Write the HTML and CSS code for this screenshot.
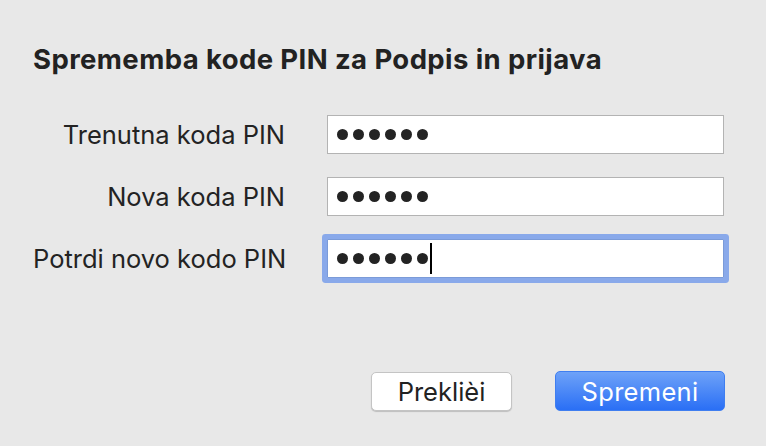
FILE: index.html
```html
<!DOCTYPE html>
<html lang="sl">
<head>
<meta charset="utf-8">
<title>Sprememba kode PIN</title>
<link rel="stylesheet" href="styles.css">
</head>
<body>
<div class="dialog">
  <h1 class="title">Sprememba kode PIN za Podpis in prijava</h1>
  <div class="form">
    <label class="label">Trenutna koda PIN</label>
    <div class="field"><span class="dot"></span><span class="dot"></span><span class="dot"></span><span class="dot"></span><span class="dot"></span><span class="dot"></span></div>
    <label class="label">Nova koda PIN</label>
    <div class="field"><span class="dot"></span><span class="dot"></span><span class="dot"></span><span class="dot"></span><span class="dot"></span><span class="dot"></span></div>
    <label class="label">Potrdi novo kodo PIN</label>
    <div class="field focused"><span class="dot"></span><span class="dot"></span><span class="dot"></span><span class="dot"></span><span class="dot"></span><span class="dot"></span><span class="caret"></span></div>
  </div>
  <div class="actions">
    <button class="btn btn-secondary">Preklièi</button>
    <button class="btn btn-primary">Spremeni</button>
  </div>
</div>
</body>
</html>
```
FILE: styles.css
```css
html, body {
  margin: 0;
  padding: 0;
  background: #e8e8e8;
  width: 766px;
  height: 446px;
  overflow: hidden;
}
body {
  font-family: Inter, "Liberation Sans", sans-serif;
  color: #222222;
}
.dialog {
  padding: 40px 41px 0 33px;
  display: flex;
  flex-direction: column;
}
.title {
  margin: 0;
  font-size: 27.5px;
  letter-spacing: 0.4px;
  font-weight: 700;
  line-height: 38px;
  color: #222222;
}
.form {
  margin-top: 37px;
  display: grid;
  grid-template-columns: 252px 397px;
  grid-auto-rows: 39px;
  column-gap: 42px;
  row-gap: 23px;
}
.label {
  font-size: 25.5px;
  text-align: right;
  align-self: center;
  line-height: 39px;
  color: #232323;
  white-space: nowrap;
}
.field {
  box-sizing: border-box;
  background: #ffffff;
  border: 1px solid #b3b3b3;
  display: flex;
  align-items: center;
  padding-left: 9px;
  gap: 5px;
}
.field.focused {
  border-color: #7b9bd8;
  border-radius: 1px;
  box-shadow: 0 0 0 5px #89a9ea;
}
.dot {
  width: 11px;
  height: 11px;
  border-radius: 50%;
  background: #232323;
}
.caret {
  width: 2px;
  height: 31px;
  background: #000000;
  margin-left: -3px;
}
.actions {
  margin-top: 94px;
  display: flex;
  justify-content: flex-end;
  gap: 43px;
}
.btn {
  font-family: Inter, "Liberation Sans", sans-serif;
  font-size: 25.5px;
  height: 39px;
  border-radius: 5px;
  padding: 0;
  box-sizing: border-box;
}
.btn-secondary {
  width: 141px;
  background: #ffffff;
  color: #222222;
  border: 1px solid #c4c4c4;
  box-shadow: 0 1px 1px rgba(0,0,0,0.18);
}
.btn-primary {
  width: 170px;
  height: 40px;
  margin-top: -1px;
  color: #ffffff;
  border: 1px solid #3f7ef0;
  background: linear-gradient(#6ea2f8, #2a6ff5);
  letter-spacing: 0.3px;
}
```
